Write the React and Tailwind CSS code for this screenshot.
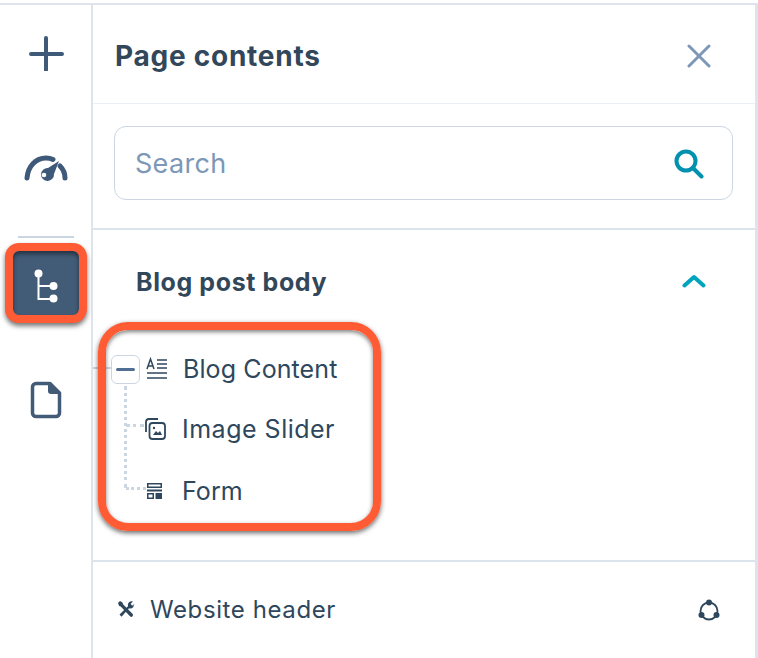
const font = { fontFamily: '"Inter", "Noto Sans", sans-serif' };

function TreeRow({ icon, label, className, textClass }) {
  return (
    <div className={`flex items-center ${className}`}>
      {icon}
      <span className={`text-[25px] leading-none text-[#2e475d] ${textClass}`}>{label}</span>
    </div>
  );
}

function RailIcons() {
  return (
    <div className="w-[93px] shrink-0 border-r-2 border-[#dfe3eb] flex flex-col items-center">
      <svg className="mt-[30px]" width="36" height="36" viewBox="0 0 36 36" fill="none" stroke="#3f5a78" strokeWidth="4" strokeLinecap="round">
        <path d="M18 3v32M3 19h31" />
      </svg>
      <svg className="mt-[82px]" width="44" height="30" viewBox="0 0 44 30" fill="none">
        <path d="M3 25C4 13 12 5 22 5c2.500 0 5 .5 7 1.500M36 13c3 3 5 7 5 12" stroke="#3f5a78" strokeWidth="5" strokeLinecap="round" />
        <path d="M35 8 24 15a6.500 6.500 0 1 0 6 6z" fill="#3f5a78" />
        <circle cx="20" cy="22" r="2.300" fill="#fff" />
      </svg>
      <div className="mt-[53px] w-[56px] h-[2px] bg-[#cbd6e2]" />
      <div className="mt-[5px] w-[82px] h-[80px] rounded-[14px] border-[8px] border-[#ff5c35] bg-[#425b76] shadow-[0_3px_5px_rgba(0,0,0,0.55),inset_0_3px_4px_rgba(0,0,0,0.45)] flex items-center justify-center pt-[6px]">
        <svg width="24" height="34" viewBox="0 0 24 34" fill="none">
          <path d="M4.500 5v25h15M4.500 17h15" stroke="#fff" strokeWidth="2" />
          <circle cx="4.500" cy="4.500" r="4" fill="#fff" />
          <circle cx="19.500" cy="17" r="4" fill="#fff" />
          <circle cx="19.500" cy="29.500" r="4" fill="#fff" />
        </svg>
      </div>
      <svg className="mt-[58px]" width="32" height="38" viewBox="0 0 32 38" fill="none">
        <path d="M6 2.500h14L29.500 12v20a3.500 3.500 0 0 1-3.500 3.500H6A3.500 3.500 0 0 1 2.500 32V6A3.500 3.500 0 0 1 6 2.500z" stroke="#425b76" strokeWidth="3.500" strokeLinejoin="round" />
        <path d="M18 2.500h2L29.500 12v1H21a3 3 0 0 1-3-3z" fill="#425b76" />
      </svg>
    </div>
  );
}

function BlogTree() {
  return (
    <div className="relative h-[330px]">
      <div className="flex items-center justify-between pl-[43px] pr-[49px] pt-[40px]">
        <h3 className="text-[25px] leading-none font-bold tracking-[0.6px] text-[#33475b]">Blog post body</h3>
        <svg className="mb-[3px]" width="24" height="14" viewBox="0 0 24 14" fill="none" stroke="#00a4bd" strokeWidth="4" strokeLinecap="round" strokeLinejoin="round">
          <path d="M2.500 11.500 12 3l9.500 8.500" />
        </svg>
      </div>

      <div className="pl-[18px] pt-[60px]">
        <TreeRow
          className="h-[28px]"
          textClass="tracking-[0.1px]"
          label="Blog Content"
          icon={
            <>
              <div className="w-[29px] h-[29px] rounded-[6px] border border-[#cbd6e2] bg-white flex items-center justify-center">
                <div className="w-[19px] h-[3px] rounded-full bg-[#4f6f94]" />
              </div>
              <svg className="ml-[6px] mr-[15px]" width="22" height="24" viewBox="0 0 22 24" fill="none" stroke="#2e475d" strokeWidth="1.500">
                <path d="M1 12 4.500 2 8 12M2.500 9h4M11 3h10M11 7h10M11 11h10M1 16h20M1 21h20" />
              </svg>
            </>
          }
        />
        <TreeRow
          className="h-[28px] mt-[32px] ml-[33px]"
          textClass="tracking-[0.5px]"
          label="Image Slider"
          icon={
            <svg className="mr-[16px]" width="22" height="22" viewBox="0 0 22 22" fill="none" stroke="#2e475d" strokeWidth="1.800">
              <path d="M2 14V4a3 3 0 0 1 3-3h9" />
              <rect x="5.500" y="5" width="15.500" height="16" rx="3" />
              <path d="M9 17l3-4 2 2 2-2 2 4z" fill="#2e475d" stroke="none" />
              <circle cx="10" cy="10" r="1.200" fill="#2e475d" stroke="none" />
            </svg>
          }
        />
        <TreeRow
          className="h-[28px] mt-[34px] ml-[35px]"
          textClass="tracking-[0.1px]"
          label="Form"
          icon={
            <svg className="mr-[18px]" width="18" height="18" viewBox="0 0 18 18" fill="#2e475d">
              <path d="M1 1h15v5H1zM2.500 2.500v2h12v-2zM1 7.500h15v2H1z" fillRule="evenodd" />
              <path d="M1 11h7v6H1zM2.500 12.500v3h4v-3z" fillRule="evenodd" />
              <path d="M9.500 11H16v6H9.500z" />
            </svg>
          }
        />
      </div>

      {/* dotted tree connectors */}
      <div className="absolute left-[31px] top-[156px] w-[3px] h-[102px] border-l-[3px] border-dotted border-[#cbd6e2]" />
      <div className="absolute left-[33px] top-[194px] w-[18px] border-t-[3px] border-dotted border-[#cbd6e2]" />
      <div className="absolute left-[33px] top-[257px] w-[20px] border-t-[3px] border-dotted border-[#cbd6e2]" />
      <div className="absolute left-0 top-[137px] w-[18px] border-t-2 border-[#cbd6e2]" />

      {/* orange annotation */}
      <div className="absolute left-[5px] top-[92px] w-[283px] h-[209px] rounded-[30px] border-[8px] border-[#ff5c35] shadow-[0_2px_5px_rgba(0,0,0,0.6),inset_0_2px_4px_rgba(0,0,0,0.5)]" />
    </div>
  );
}

export default function App() {
  return (
    <div className="w-[758px] h-[658px] overflow-hidden bg-white" style={font}>
      <div className="h-[3px] bg-white" />
      <div className="h-[655px] flex border-t-2 border-[#dfe3eb]">
        <RailIcons />
        <div className="flex-1 flex flex-col border-r-[3px] border-[#dfe3eb]">
          <div className="h-[99px] flex items-center justify-between pl-[22px] pr-[44px] pt-[4px] border-b border-[#eaf0f6]">
            <h2 className="text-[28px] leading-none font-bold tracking-[0.75px] text-[#33475b]">Page contents</h2>
            <svg width="24" height="24" viewBox="0 0 24 24" fill="none" stroke="#7c98b6" strokeWidth="3" strokeLinecap="round">
              <path d="M2 2l20 20M22 2 2 22" />
            </svg>
          </div>
          <div className="pl-[21px] pr-[22px] pt-[22px] pb-[28px] border-b-2 border-[#dbe3ec]">
            <div className="h-[74px] rounded-[12px] border border-[#cbd6e2] bg-white flex items-center justify-between pl-[20px] pr-[28px] pt-[2px]">
              <span className="text-[27px] tracking-[0.3px] text-[#7c98b6]">Search</span>
              <svg width="30" height="30" viewBox="0 0 30 30" fill="none" stroke="#0091ae" strokeWidth="4" strokeLinecap="round">
                <circle cx="12" cy="12" r="9.500" />
                <path d="M19 19l8.500 8.500" />
              </svg>
            </div>
          </div>
          <BlogTree />
          <div className="flex-1 border-t-2 border-[#dbe3ec] flex items-center justify-between pl-[24px] pr-[35px]">
            <div className="flex items-center gap-[15px]">
              <svg className="mb-[3px]" width="18" height="18" viewBox="0 0 18 18" fill="#2e475d">
                {/* wrench */}
                <path d="M2.500 14.500 11 6.200a3.800 3.800 0 0 1 5-4.700l-2.300 2.300 1 1.500 1.800.2L17 3a4 4 0 0 1-5 5.200L4.500 16.800z" />
                {/* screwdriver */}
                <path d="M1 3 3 1l2.500 1.500.5 1.800L15.500 13.800a1.700 1.700 0 0 1-2.500 2.500L3.700 6.500 2.200 6z" />
              </svg>
              <span className="text-[24px] leading-none tracking-[0.6px] text-[#2e475d]">Website header</span>
            </div>
            <svg width="22" height="24" viewBox="0 0 22 24" fill="none">
              <circle cx="11" cy="13" r="8.500" stroke="#2e475d" strokeWidth="1.800" />
              <circle cx="11" cy="4.500" r="3" fill="#2e475d" />
              <circle cx="3.500" cy="17" r="3" fill="#2e475d" />
              <circle cx="18.500" cy="17" r="3" fill="#2e475d" />
            </svg>
          </div>
        </div>
      </div>
    </div>
  );
}
